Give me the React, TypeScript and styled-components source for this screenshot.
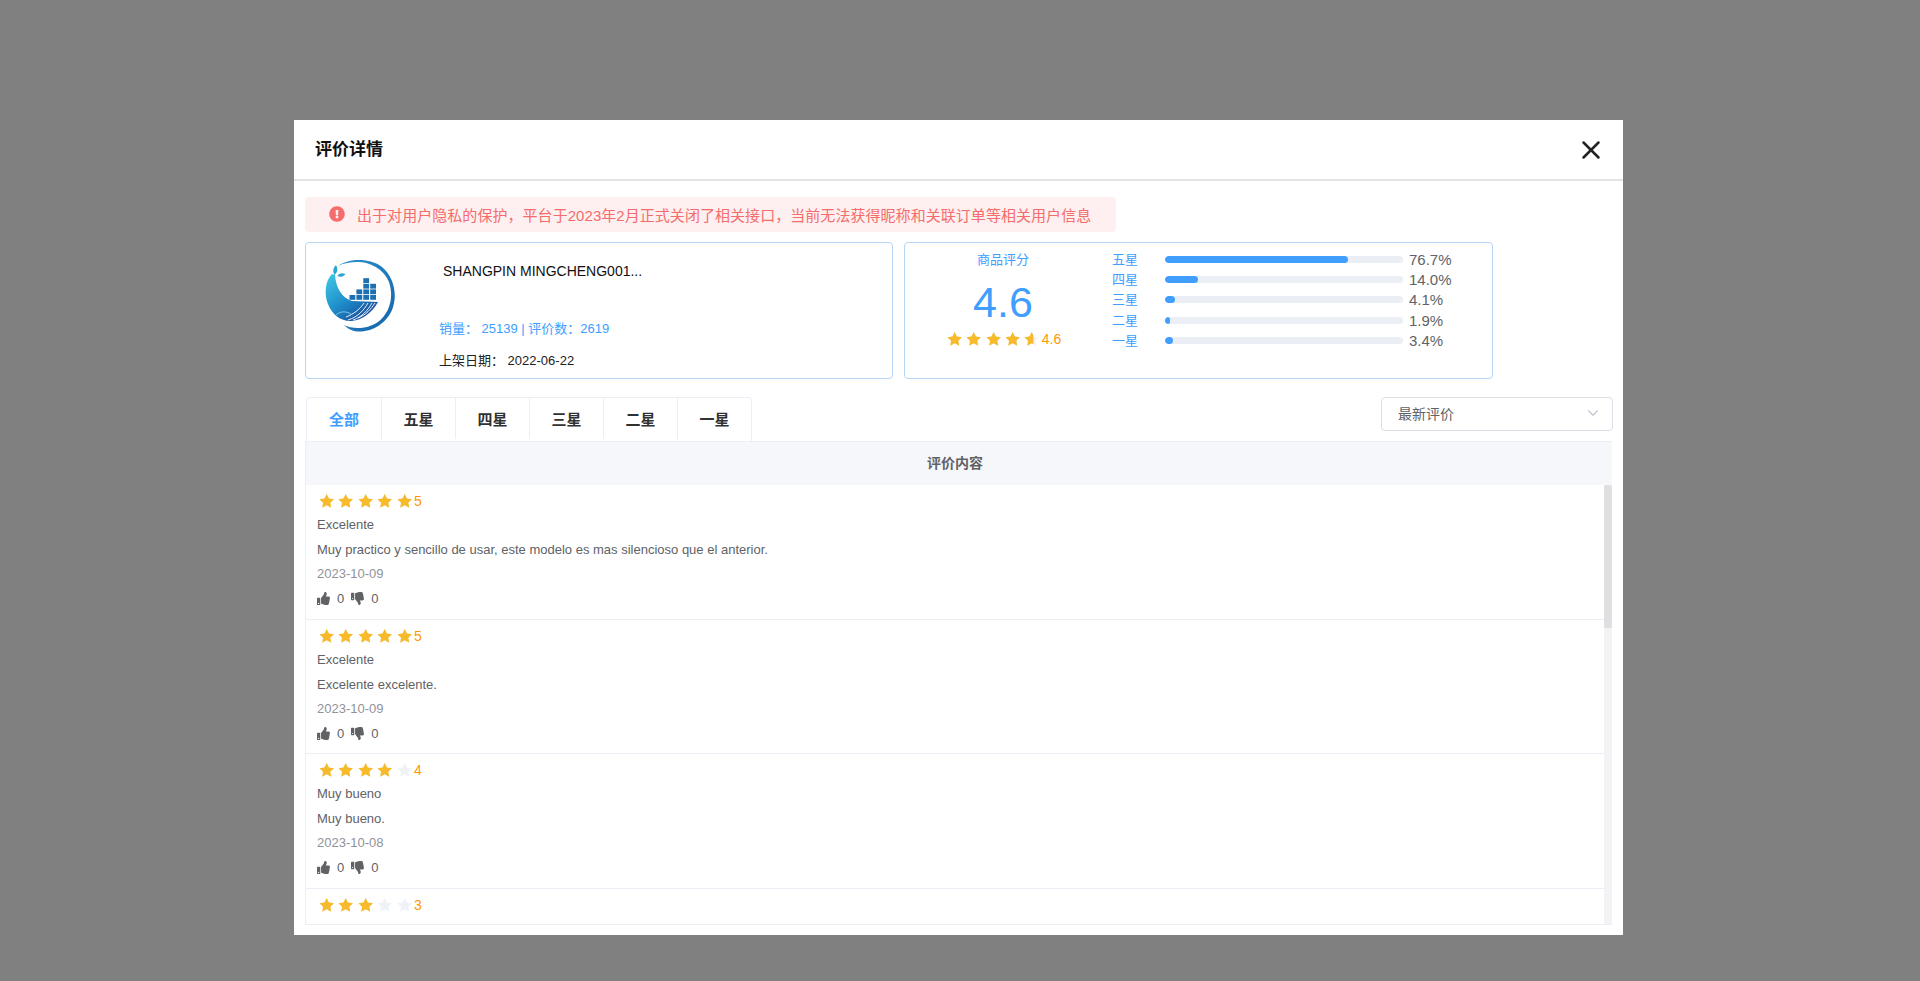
import React from "react";
import styled, { createGlobalStyle } from "styled-components";
import { X, ChevronDown } from "lucide-react";
import { FaThumbsUp, FaThumbsDown, FaExclamationCircle } from "react-icons/fa";

const GlobalStyle = createGlobalStyle`
  html, body {
    margin: 0;
    padding: 0;
    height: 100%;
    overflow: hidden;
    background: #808080;
    font-family: "Liberation Sans", "Noto Sans CJK SC", sans-serif;
  }
  * {
    box-sizing: border-box;
  }
`;

const Overlay = styled.div`
  height: 981px;
  background: #808080;
  display: flex;
  justify-content: flex-start;
  padding: 120px 0 0 294px;
`;

const Modal = styled.div`
  width: 1329px;
  height: 815px;
  background: #fff;
  display: flex;
  flex-direction: column;
  overflow: hidden;
`;

const Header = styled.div`
  height: 61px;
  flex: none;
  display: flex;
  align-items: center;
  justify-content: space-between;
  padding: 0 17px 0 21px;
  border-bottom: 2px solid #e3e3e6;
`;

const Title = styled.div`
  font-size: 17px;
  font-weight: 700;
  color: #111;
  margin-top: -5px;
`;

const CloseButton = styled.button`
  border: none;
  background: transparent;
  padding: 0;
  display: flex;
  color: #222;
  cursor: pointer;
`;

const Body = styled.div`
  flex: 1;
  min-height: 0;
  padding: 16px 10px 10px 11px;
  display: flex;
  flex-direction: column;
`;

const Alert = styled.div`
  width: 811px;
  height: 35px;
  flex: none;
  display: flex;
  align-items: center;
  gap: 12px;
  padding: 0 0 1px 24px;
  border-radius: 4px;
  background: #fef0f0;
  color: #f56c6c;
  font-size: 15px;
  letter-spacing: 0.05px;
`;

const SummaryRow = styled.div`
  display: flex;
  gap: 11px;
  margin-top: 10px;
  flex: none;
`;

const Card = styled.div<{ $width: number }>`
  width: ${(p) => p.$width}px;
  height: 137px;
  border: 1px solid #b6d6f6;
  border-radius: 4px;
  display: flex;
`;

const LogoBox = styled.div`
  width: 133px;
  flex: none;
  padding: 17px 0 0 19px;
`;

const ProductInfo = styled.div`
  flex: 1;
  display: flex;
  flex-direction: column;
`;

const ProductName = styled.div`
  font-size: 14px;
  color: #111;
  margin: 20px 0 0 4px;
  line-height: 16px;
  height: 58px;
`;

const SalesLine = styled.div`
  font-size: 13px;
  color: #409eff;
  line-height: 16px;
`;

const DateLine = styled.div`
  font-size: 13px;
  color: #222;
  line-height: 16px;
  margin-top: 16px;
`;

const ScoreBox = styled.div`
  width: 196px;
  flex: none;
  display: flex;
  flex-direction: column;
  align-items: center;
  padding-top: 8px;
`;

const ScoreTitle = styled.div`
  font-size: 13px;
  line-height: 18px;
  color: #409eff;
`;

const ScoreValue = styled.div`
  font-size: 43px;
  line-height: 50px;
  color: #409eff;
  margin-top: 8px;
`;

const ScoreStars = styled.div`
  display: flex;
  align-items: center;
  margin-top: 4px;
`;

const RatingNumber = styled.span`
  font-size: 14px;
  color: #ff9900;
`;

const Distribution = styled.div`
  flex: 1;
  padding: 6px 0 0 11px;
`;

const DistributionRow = styled.div`
  height: 20.4px;
  display: flex;
  align-items: center;
`;

const DistributionLabel = styled.span`
  width: 53px;
  flex: none;
  font-size: 13px;
  color: #409eff;
  margin-bottom: 2px;
`;

const Track = styled.div`
  width: 238px;
  height: 7px;
  flex: none;
  border-radius: 4px;
  background: #ebeef5;
  overflow: hidden;
`;

const Fill = styled.div`
  height: 100%;
  border-radius: 4px;
  background: #409eff;
`;

const Percent = styled.span`
  font-size: 15px;
  color: #606266;
  margin-left: 6px;
`;

const TabBar = styled.div`
  display: flex;
  justify-content: space-between;
  align-items: flex-start;
  margin-top: 18px;
  flex: none;
`;

const Tabs = styled.div`
  display: flex;
  height: 45px;
  margin-left: 1px;
  border: 1px solid #ebeef5;
  border-bottom: none;
  border-radius: 4px 4px 0 0;
`;

const Tab = styled.div<{ $active?: boolean; $first?: boolean }>`
  width: 74px;
  display: flex;
  align-items: center;
  justify-content: center;
  font-size: 15px;
  font-weight: 700;
  color: ${(p) => (p.$active ? "#409eff" : "#303133")};
  border-left: ${(p) => (p.$first ? "none" : "1px solid #ebeef5")};
  margin-bottom: 3px;
`;

const Select = styled.div`
  width: 232px;
  height: 34px;
  border: 1px solid #dcdfe6;
  border-radius: 4px;
  display: flex;
  align-items: center;
  justify-content: space-between;
  padding: 0 10px 2px 16px;
  font-size: 14px;
  color: #606266;
`;

const Table = styled.div`
  width: 1307px;
  flex: 1;
  min-height: 0;
  display: flex;
  flex-direction: column;
  border-left: 1px solid #ebeef5;
  border-bottom: 1px solid #ebeef5;
  border-top: 1px solid #ebeef5;
  margin-top: -1px;
`;

const TableHead = styled.div`
  height: 43px;
  flex: none;
  display: flex;
  align-items: center;
  justify-content: center;
  background: #f5f7fa;
  font-size: 14px;
  font-weight: 700;
  color: #606266;
  padding: 0 8px 4px 0;
`;

const TableBody = styled.div`
  flex: 1;
  min-height: 0;
  display: flex;
`;

const Rows = styled.div`
  flex: 1;
  overflow: hidden;
`;

const Row = styled.div`
  height: 134.6px;
  padding: 6px 0 0 11px;
  border-bottom: 1px solid #ebeef5;
`;

const StarLine = styled.div`
  height: 20px;
  display: flex;
  align-items: center;
`;

const ReviewTitle = styled.div`
  font-size: 13px;
  line-height: 25px;
  color: #606266;
  margin-top: 1px;
`;

const ReviewText = styled.div`
  font-size: 13px;
  line-height: 25px;
  color: #606266;
`;

const ReviewDate = styled.div`
  font-size: 13px;
  line-height: 24px;
  color: #909399;
`;

const Votes = styled.div`
  display: flex;
  align-items: center;
  gap: 7px;
  height: 25px;
  font-size: 13px;
  color: #606266;
`;

const Vote = styled.span`
  display: flex;
  align-items: center;
  gap: 7px;
`;

const ScrollTrack = styled.div`
  width: 8px;
  flex: none;
  background: #f3f2f5;
`;

const ScrollThumb = styled.div`
  height: 143px;
  background: #dfdfe1;
  border-radius: 2px;
`;

const StarSvg = styled.svg`
  width: 19.4px;
  height: 16px;
  flex: none;
  display: block;
`;

const STAR_PATH = "M9.7 1l2.5 5.2 5.7.8-4.1 4 1 5.6-5.1-2.7-5.1 2.7 1-5.6-4.1-4 5.7-.8z";

const Star = ({ fill, id }: { fill: number; id: string }) => (
  <StarSvg viewBox="0 0 19.4 18">
    <defs>
      <clipPath id={id}>
        <rect x="0" y="0" width={19.4 * fill} height="18" />
      </clipPath>
    </defs>
    <path d={STAR_PATH} fill="#eff2f7" />
    <path d={STAR_PATH} fill="#f7ba2a" clipPath={`url(#${id})`} />
  </StarSvg>
);

const Stars = ({ value, name }: { value: number; name: string }) => (
  <>
    {[0, 1, 2, 3, 4].map((i) => (
      <Star key={i} id={`${name}-${i}`} fill={Math.max(0, Math.min(1, value - i))} />
    ))}
  </>
);

// cells of the little bar chart on the whale's back: [x, top row count]
const logoColumns: [number, number][] = [
  [39.5, 1],
  [46.4, 2],
  [53.3, 4],
  [60.2, 3],
];

const Logo = () => (
  <svg width="72" height="74" viewBox="15 10 72 74">
    <defs>
      <linearGradient id="whale" x1="0.05" y1="0.1" x2="0.75" y2="0.95">
        <stop offset="0" stopColor="#3cc0e0" />
        <stop offset="0.5" stopColor="#1f8fcb" />
        <stop offset="1" stopColor="#1a4f9e" />
      </linearGradient>
      <linearGradient id="ring" x1="0" y1="0" x2="1" y2="1">
        <stop offset="0" stopColor="#2a93cf" />
        <stop offset="1" stopColor="#1563a8" />
      </linearGradient>
    </defs>
    <path
      d="M28 16C40 8 60 8 72 17C84 27 88 45 82 60C76 74 60 84 44 81C40 80 37 78 34 75C42 79 56 80 68 72C80 63 84 47 79 32C74 19 60 12 48 12C40 12 34 13 28 16Z"
      fill="url(#ring)"
    />
    <path d="M22 24C15 31 14 45 18 54C22 65 32 72 42 71C52 70 62 63 68 52L42 51C32 48 26 38 25 25Z" fill="url(#whale)" />
    <path d="M24.500 25C22.500 21 23 18 26 15C28 19 28 22 24.500 25ZM27.500 26C29 23 32 22.500 35.500 24C33 27 30 27.500 27.500 26Z" fill="#2aa6d6" />
    {logoColumns.map(([x, count]) =>
      Array.from({ length: count }).map((_, i) => (
        <rect key={`${x}-${i}`} x={x} y={45 - i * 5.6} width="5.8" height="4.800" fill="#1c6fb0" />
      ))
    )}
    <path
      d="M38 70C48 67 54 60 58 53M43 70C52 67 58 60 62 53M48 68C56 65 61 59 65 53M36 67C44 64 50 59 54 53"
      fill="none"
      stroke="#fff"
      strokeWidth="0.9"
    />
    <path d="M26 65C30 61 36 61 41 64" fill="none" stroke="#7fd0ea" strokeWidth="0.9" />
  </svg>
);

const distribution = [
  { label: "五星", value: 76.7 },
  { label: "四星", value: 14.0 },
  { label: "三星", value: 4.1 },
  { label: "二星", value: 1.9 },
  { label: "一星", value: 3.4 },
];

const tabs = ["全部", "五星", "四星", "三星", "二星", "一星"];

const reviews = [
  { rating: 5, title: "Excelente", text: "Muy practico y sencillo de usar, este modelo es mas silencioso que el anterior.", date: "2023-10-09" },
  { rating: 5, title: "Excelente", text: "Excelente excelente.", date: "2023-10-09" },
  { rating: 4, title: "Muy bueno", text: "Muy bueno.", date: "2023-10-08" },
  { rating: 3, title: "Bueno", text: "", date: "" },
];

export default function App() {
  return (
    <Overlay>
      <GlobalStyle />
      <Modal>
        <Header>
          <Title>评价详情</Title>
          <CloseButton aria-label="关闭">
            <X size={30} strokeWidth={2} />
          </CloseButton>
        </Header>
        <Body>
          <Alert>
            <FaExclamationCircle size={16} />
            <span>出于对用户隐私的保护，平台于2023年2月正式关闭了相关接口，当前无法获得昵称和关联订单等相关用户信息</span>
          </Alert>
          <SummaryRow>
            <Card $width={588}>
              <LogoBox>
                <Logo />
              </LogoBox>
              <ProductInfo>
                <ProductName>SHANGPIN MINGCHENG001...</ProductName>
                <SalesLine>销量： 25139 | 评价数：2619</SalesLine>
                <DateLine>上架日期： 2022-06-22</DateLine>
              </ProductInfo>
            </Card>
            <Card $width={589}>
              <ScoreBox>
                <ScoreTitle>商品评分</ScoreTitle>
                <ScoreValue>4.6</ScoreValue>
                <ScoreStars>
                  <Stars value={4.6} name="score" />
                  <RatingNumber>4.6</RatingNumber>
                </ScoreStars>
              </ScoreBox>
              <Distribution>
                {distribution.map((d) => (
                  <DistributionRow key={d.label}>
                    <DistributionLabel>{d.label}</DistributionLabel>
                    <Track>
                      <Fill style={{ width: `${d.value}%` }} />
                    </Track>
                    <Percent>{d.value.toFixed(1)}%</Percent>
                  </DistributionRow>
                ))}
              </Distribution>
            </Card>
          </SummaryRow>
          <TabBar>
            <Tabs>
              {tabs.map((t, i) => (
                <Tab key={t} $active={i === 0} $first={i === 0}>
                  {t}
                </Tab>
              ))}
            </Tabs>
            <Select>
              最新评价
              <ChevronDown size={18} strokeWidth={1.5} color="#c0c4cc" />
            </Select>
          </TabBar>
          <Table>
            <TableHead>评价内容</TableHead>
            <TableBody>
              <Rows>
                {reviews.map((r, i) => (
                  <Row key={i}>
                    <StarLine>
                      <Stars value={r.rating} name={`row${i}`} />
                      <RatingNumber>{r.rating}</RatingNumber>
                    </StarLine>
                    <ReviewTitle>{r.title}</ReviewTitle>
                    {r.text && <ReviewText>{r.text}</ReviewText>}
                    {r.date && <ReviewDate>{r.date}</ReviewDate>}
                    {r.date && (
                      <Votes>
                        <Vote>
                          <FaThumbsUp size={13} />0
                        </Vote>
                        <Vote>
                          <FaThumbsDown size={13} />0
                        </Vote>
                      </Votes>
                    )}
                  </Row>
                ))}
              </Rows>
              <ScrollTrack>
                <ScrollThumb />
              </ScrollTrack>
            </TableBody>
          </Table>
        </Body>
      </Modal>
    </Overlay>
  );
}
